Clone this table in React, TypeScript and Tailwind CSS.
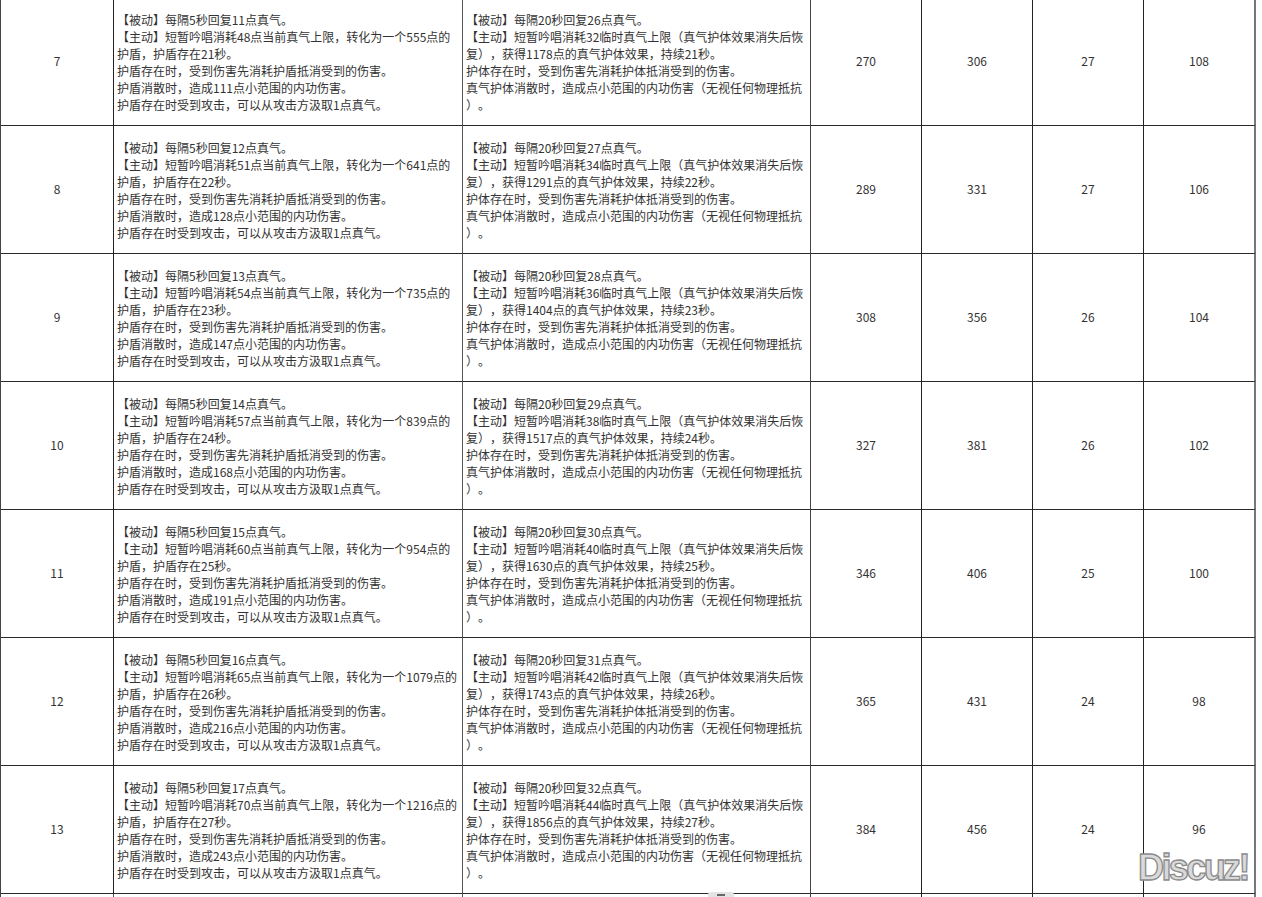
import React from "react";

type Row = {
  lv: number;
  p: number;
  a: number;
  s: number;
  t: number;
  d: number;
  p2: number;
  a2: number;
  h: number;
  n: [number, number, number, number];
};

const rows: Row[] = [
  { lv: 7, p: 11, a: 48, s: 555, t: 21, d: 111, p2: 26, a2: 32, h: 1178, n: [270, 306, 27, 108] },
  { lv: 8, p: 12, a: 51, s: 641, t: 22, d: 128, p2: 27, a2: 34, h: 1291, n: [289, 331, 27, 106] },
  { lv: 9, p: 13, a: 54, s: 735, t: 23, d: 147, p2: 28, a2: 36, h: 1404, n: [308, 356, 26, 104] },
  { lv: 10, p: 14, a: 57, s: 839, t: 24, d: 168, p2: 29, a2: 38, h: 1517, n: [327, 381, 26, 102] },
  { lv: 11, p: 15, a: 60, s: 954, t: 25, d: 191, p2: 30, a2: 40, h: 1630, n: [346, 406, 25, 100] },
  { lv: 12, p: 16, a: 65, s: 1079, t: 26, d: 216, p2: 31, a2: 42, h: 1743, n: [365, 431, 24, 98] },
  { lv: 13, p: 17, a: 70, s: 1216, t: 27, d: 243, p2: 32, a2: 44, h: 1856, n: [384, 456, 24, 96] },
];

const font = { fontFamily: '"Noto Sans CJK SC", "Noto Sans", sans-serif' };

function TextCell({ lines, last }: { lines: string[]; last?: boolean }) {
  return (
    <div
      className={`flex flex-col justify-center overflow-hidden border-b border-b-[#2a2a2a] border-r px-[3px] pt-[1px] text-[12px] leading-[17px] text-[#333] [text-spacing-trim:space-all] ${
        last ? "border-r-[#444]" : "border-r-[#555]"
      }`}
    >
      {lines.map((l, i) => (
        <div key={i} className="whitespace-nowrap">
          {l}
        </div>
      ))}
    </div>
  );
}

function NumCell({ v, lastCol }: { v: string | number; lastCol?: boolean }) {
  return (
    <div
      className={`flex items-center justify-center border-b border-b-[#2a2a2a] pb-[1px] text-[12px] text-[#333] ${
        lastCol ? "border-r-2 border-r-[#777]" : "border-r border-r-[#222]"
      }`}
    >
      {v}
    </div>
  );
}

export default function App() {
  return (
    <div className="relative h-[897px] w-[1262px] overflow-hidden bg-white" style={font}>
      <div className="mt-[-2px] w-[1256px] border-l border-l-[#444]">
        {rows.map((r) => (
          <div
            key={r.lv}
            className="grid h-[128px] grid-cols-[113px_349px_348px_111px_111px_111px_112px]"
          >
            <NumCell v={r.lv} />
            <TextCell
              lines={[
                `【被动】每隔5秒回复${r.p}点真气。`,
                `【主动】短暂吟唱消耗${r.a}点当前真气上限，转化为一个${r.s}点的`,
                `护盾，护盾存在${r.t}秒。`,
                "护盾存在时，受到伤害先消耗护盾抵消受到的伤害。",
                `护盾消散时，造成${r.d}点小范围的内功伤害。`,
                "护盾存在时受到攻击，可以从攻击方汲取1点真气。",
              ]}
            />
            <TextCell
              last
              lines={[
                `【被动】每隔20秒回复${r.p2}点真气。`,
                `【主动】短暂吟唱消耗${r.a2}临时真气上限（真气护体效果消失后恢`,
                `复），获得${r.h}点的真气护体效果，持续${r.t}秒。`,
                "护体存在时，受到伤害先消耗护体抵消受到的伤害。",
                "真气护体消散时，造成点小范围的内功伤害（无视任何物理抵抗",
                "）。",
              ]}
            />
            <NumCell v={r.n[0]} />
            <NumCell v={r.n[1]} />
            <NumCell v={r.n[2]} />
            <NumCell v={r.n[3]} lastCol />
          </div>
        ))}
        <div className="grid h-[20px] grid-cols-[113px_349px_348px_111px_111px_111px_112px]">
          <div className="border-r border-r-[#555]" />
          <div className="border-r border-r-[#555]" />
          <div className="border-r border-r-[#444]" />
          <div className="border-r border-r-[#222]" />
          <div className="border-r border-r-[#222]" />
          <div className="border-r border-r-[#222]" />
          <div className="border-r-2 border-r-[#777]" />
        </div>
      </div>

      {/* small scroll handle at bottom */}
      <div className="absolute left-[708px] top-[892px] flex h-[8px] w-[26px] justify-center rounded-t-[3px] bg-[#e4e4e4]">
        <div className="mt-[2px] h-[2px] w-[8px] bg-[#666]" />
      </div>

      {/* Discuz! watermark */}
      <div
        className="absolute left-[1138px] top-[846px] select-none text-[36px] font-bold leading-[44px] tracking-[-2.6px] text-[#d9d9d9] [-webkit-text-stroke:1.3px_#8c8c8c]"
        style={{ fontFamily: '"Liberation Sans", Arial, sans-serif' }}
      >
        Discuz!
      </div>
    </div>
  );
}
